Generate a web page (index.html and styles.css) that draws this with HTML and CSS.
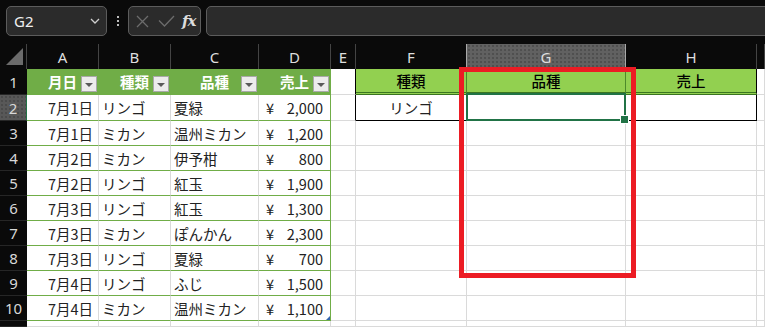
FILE: index.html
```html
<!DOCTYPE html>
<html lang="ja">
<head>
    <meta charset="UTF-8">
    <title>Sheet</title>
    <link rel="stylesheet" href="styles.css">
</head>
<body>
    <div class="toolbar">
        <div class="namebox">
            <span>G2</span>
            <svg width="10" height="6" viewBox="0 0 10 6"><polyline points="1,1 5,5 9,1" fill="none" stroke="#cfcfcf" stroke-width="1.3"/></svg>
        </div>
        <div class="grip"><i></i><i></i><i></i></div>
        <div class="fxbox">
            <svg width="13" height="13" viewBox="0 0 13 13"><path d="M1 1 L12 12 M12 1 L1 12" stroke="#6c6c6c" stroke-width="1.3"/></svg>
            <svg width="17" height="12" viewBox="0 0 17 12"><polyline points="1,5.5 6.5,11 16,1" fill="none" stroke="#6c6c6c" stroke-width="1.3"/></svg>
            <span class="fx">fx</span>
        </div>
        <div class="formula"></div>
    </div>

    <div class="sheet">
        <div class="row cols">
            <div class="corner"><span class="tri"></span></div>
            <div class="colhead c-a">A</div>
            <div class="colhead c-b">B</div>
            <div class="colhead c-c">C</div>
            <div class="colhead c-d">D</div>
            <div class="colhead c-e">E</div>
            <div class="colhead c-f">F</div>
            <div class="colhead c-g active">G</div>
            <div class="colhead c-h">H</div>
            <div class="colhead c-i"></div>
        </div>

        <div class="row tall">
            <div class="rowhead">1</div>
            <div class="cell c-a thead">月日<span class="filter"></span></div>
            <div class="cell c-b thead">種類<span class="filter"></span></div>
            <div class="cell c-c thead">品種<span class="filter"></span></div>
            <div class="cell c-d thead">売上<span class="filter"></span></div>
            <div class="cell c-e edge"></div>
            <div class="cell c-f fhead">種類</div>
            <div class="cell c-g fhead">品種</div>
            <div class="cell c-h fhead last">売上</div>
            <div class="cell c-i"></div>
        </div>

        <div class="row tall">
            <div class="rowhead active">2</div>
            <div class="cell c-a tbl right">7月1日</div>
            <div class="cell c-b tbl">リンゴ</div>
            <div class="cell c-c tbl">夏緑</div>
            <div class="cell c-d tbl money"><span>¥</span><span>2,000</span></div>
            <div class="cell c-e edge"></div>
            <div class="cell c-f fcell center">リンゴ</div>
            <div class="cell c-g fcell selected"></div>
            <div class="cell c-h fcell last"></div>
            <div class="cell c-i"></div>
        </div>

        <div class="row">
            <div class="rowhead">3</div>
            <div class="cell c-a tbl right">7月1日</div>
            <div class="cell c-b tbl">ミカン</div>
            <div class="cell c-c tbl">温州ミカン</div>
            <div class="cell c-d tbl money"><span>¥</span><span>1,200</span></div>
            <div class="cell c-e"></div>
            <div class="cell c-f"></div>
            <div class="cell c-g"></div>
            <div class="cell c-h"></div>
            <div class="cell c-i"></div>
        </div>

        <div class="row">
            <div class="rowhead">4</div>
            <div class="cell c-a tbl right">7月2日</div>
            <div class="cell c-b tbl">ミカン</div>
            <div class="cell c-c tbl">伊予柑</div>
            <div class="cell c-d tbl money"><span>¥</span><span>800</span></div>
            <div class="cell c-e"></div>
            <div class="cell c-f"></div>
            <div class="cell c-g"></div>
            <div class="cell c-h"></div>
            <div class="cell c-i"></div>
        </div>

        <div class="row">
            <div class="rowhead">5</div>
            <div class="cell c-a tbl right">7月2日</div>
            <div class="cell c-b tbl">リンゴ</div>
            <div class="cell c-c tbl">紅玉</div>
            <div class="cell c-d tbl money"><span>¥</span><span>1,900</span></div>
            <div class="cell c-e"></div>
            <div class="cell c-f"></div>
            <div class="cell c-g"></div>
            <div class="cell c-h"></div>
            <div class="cell c-i"></div>
        </div>

        <div class="row">
            <div class="rowhead">6</div>
            <div class="cell c-a tbl right">7月3日</div>
            <div class="cell c-b tbl">リンゴ</div>
            <div class="cell c-c tbl">紅玉</div>
            <div class="cell c-d tbl money"><span>¥</span><span>1,300</span></div>
            <div class="cell c-e"></div>
            <div class="cell c-f"></div>
            <div class="cell c-g"></div>
            <div class="cell c-h"></div>
            <div class="cell c-i"></div>
        </div>

        <div class="row">
            <div class="rowhead">7</div>
            <div class="cell c-a tbl right">7月3日</div>
            <div class="cell c-b tbl">ミカン</div>
            <div class="cell c-c tbl">ぽんかん</div>
            <div class="cell c-d tbl money"><span>¥</span><span>2,300</span></div>
            <div class="cell c-e"></div>
            <div class="cell c-f"></div>
            <div class="cell c-g"></div>
            <div class="cell c-h"></div>
            <div class="cell c-i"></div>
        </div>

        <div class="row">
            <div class="rowhead">8</div>
            <div class="cell c-a tbl right">7月3日</div>
            <div class="cell c-b tbl">リンゴ</div>
            <div class="cell c-c tbl">夏緑</div>
            <div class="cell c-d tbl money"><span>¥</span><span>700</span></div>
            <div class="cell c-e"></div>
            <div class="cell c-f"></div>
            <div class="cell c-g"></div>
            <div class="cell c-h"></div>
            <div class="cell c-i"></div>
        </div>

        <div class="row">
            <div class="rowhead">9</div>
            <div class="cell c-a tbl right">7月4日</div>
            <div class="cell c-b tbl">リンゴ</div>
            <div class="cell c-c tbl">ふじ</div>
            <div class="cell c-d tbl money"><span>¥</span><span>1,500</span></div>
            <div class="cell c-e"></div>
            <div class="cell c-f"></div>
            <div class="cell c-g"></div>
            <div class="cell c-h"></div>
            <div class="cell c-i"></div>
        </div>

        <div class="row">
            <div class="rowhead">10</div>
            <div class="cell c-a tbl right">7月4日</div>
            <div class="cell c-b tbl">ミカン</div>
            <div class="cell c-c tbl">温州ミカン</div>
            <div class="cell c-d tbl money table-end"><span>¥</span><span>1,100</span></div>
            <div class="cell c-e"></div>
            <div class="cell c-f"></div>
            <div class="cell c-g"></div>
            <div class="cell c-h"></div>
            <div class="cell c-i"></div>
        </div>

        <div class="row partial">
            <div class="rowhead"></div>
            <div class="cell c-a"></div>
            <div class="cell c-b"></div>
            <div class="cell c-c"></div>
            <div class="cell c-d"></div>
            <div class="cell c-e"></div>
            <div class="cell c-f"></div>
            <div class="cell c-g"></div>
            <div class="cell c-h"></div>
            <div class="cell c-i"></div>
        </div>
    </div>

    <div class="highlight"></div>
</body>
</html>
```

FILE: styles.css
```css
* {
    margin: 0;
    padding: 0;
    box-sizing: border-box;
}
body {
    width: 765px;
    height: 327px;
    overflow: hidden;
    position: relative;
    background: #0a0a0a;
    font-family: "Noto Sans CJK JP", sans-serif;
}
.toolbar {
    height: 44px;
    display: flex;
    align-items: flex-start;
    padding: 6px 0 0 6px;
}
.namebox, .fxbox, .formula {
    height: 30px;
    background: #2b2b2b;
    border: 1px solid #5c5c5c;
    border-radius: 5px;
}
.namebox {
    width: 101px;
    display: flex;
    align-items: center;
    justify-content: space-between;
    padding: 0 6px 0 7px;
    color: #f0f0f0;
    font-family: "Noto Sans", sans-serif;
    font-size: 15px;
}
.grip {
    width: 21px;
    height: 30px;
    display: flex;
    flex-direction: column;
    align-items: center;
    justify-content: center;
    gap: 2px;
}
.grip i {
    width: 2px;
    height: 2px;
    background: #bdbdbd;
}
.fxbox {
    width: 73px;
    display: flex;
    align-items: center;
    padding: 0 0 0 7px;
    gap: 9px;
}
.fx {
    font-family: "DejaVu Serif", serif;
    font-style: italic;
    font-weight: 700;
    font-size: 15px;
    color: #dcdcdc;
    margin-left: -2px;
    letter-spacing: -1px;
}
.formula {
    flex: 1;
    margin-left: 5px;
    margin-right: -6px;
}
.sheet {
    display: flex;
    flex-direction: column;
}
.row {
    display: flex;
    height: 25px;
    flex: none;
}
.row.tall {
    height: 26px;
}
.row.partial {
    height: 6px;
}
.corner {
    width: 27px;
    border-right: 1px solid #444;
    position: relative;
}
.tri {
    position: absolute;
    right: 3px;
    bottom: 4px;
    width: 17px;
    height: 17px;
    background: #6b6b6b;
    clip-path: polygon(100% 0, 100% 100%, 0 100%);
}
.colhead {
    flex: none;
    display: flex;
    align-items: center;
    justify-content: center;
    border-right: 1px solid #444;
    color: #dedede;
    font-family: "Noto Sans", sans-serif;
    font-size: 15px;
}
.colhead.active {
    background-color: #616161;
    background-image: radial-gradient(circle, #4f4f4f 0.7px, transparent 0.9px);
    background-size: 4px 4px;
    border-left: 1px solid #a8a8a8;
    border-right: 1px solid #a8a8a8;
    margin-left: -1px;
    width: 160px;
}
.rowhead {
    width: 27px;
    flex: none;
    display: flex;
    align-items: center;
    justify-content: center;
    color: #d8d8d8;
    font-family: "Noto Sans", sans-serif;
    font-size: 15px;
    border-bottom: 1px solid #262626;
}
.rowhead.active {
    background-color: #585858;
    background-image: radial-gradient(circle, #4a4a4a 0.7px, transparent 0.9px);
    background-size: 4px 4px;
    border-right: 1px solid #217346;
}
.cell {
    flex: none;
    display: flex;
    align-items: center;
    padding: 0 3px;
    background: #fff;
    border-right: 1px solid #dadada;
    border-bottom: 1px solid #dadada;
    color: #222;
    font-size: 14.5px;
    white-space: nowrap;
}
.c-a { width: 72px; }
.c-b { width: 72px; }
.c-c { width: 88px; }
.c-d { width: 72px; }
.c-e { width: 25px; }
.c-f { width: 111px; }
.c-g { width: 159px; }
.c-h { width: 131px; }
.c-i { flex: 1; }
.right {
    justify-content: flex-end;
    padding-right: 5px;
}
.center {
    justify-content: center;
}
.money {
    justify-content: space-between;
    padding: 0 7px;
}
.tbl {
    border-bottom-color: #70ad47;
}
.tbl.c-d, .thead.c-d {
    border-right-color: #70ad47;
}
.thead {
    position: relative;
    justify-content: center;
    background: #70ad47;
    border-color: #70ad47;
    color: #fff;
    font-weight: 700;
}
.filter {
    position: absolute;
    right: 1px;
    bottom: 2px;
    width: 16px;
    height: 16px;
    display: flex;
    align-items: center;
    justify-content: center;
    background: #ececec;
    border: 1px solid #a9a9a9;
}
.filter::after {
    content: "";
    border-left: 4px solid transparent;
    border-right: 4px solid transparent;
    border-top: 4px solid #5a5a5a;
    margin-top: 1px;
}
.table-end {
    position: relative;
}
.table-end::after {
    content: "";
    position: absolute;
    right: 0;
    bottom: 0;
    width: 4px;
    height: 4px;
    background: #3565b0;
    clip-path: polygon(100% 0, 100% 100%, 0 100%);
}
.edge {
    border-right-color: #000;
}
.fhead {
    justify-content: center;
    background: #92d050;
    border-right-color: #4d8a2a;
    border-bottom: 3px double #3a7520;
    color: #000;
    font-weight: 500;
}
.fcell {
    border-bottom-color: #000;
}
.last {
    border-right-color: #000;
}
.selected {
    position: relative;
    z-index: 2;
}
.selected::after {
    content: "";
    position: absolute;
    top: -2px;
    left: -1px;
    right: -1px;
    bottom: -1px;
    border: 2px solid #217346;
}
.selected::before {
    content: "";
    position: absolute;
    right: -4px;
    bottom: -4px;
    width: 7px;
    height: 7px;
    background: #217346;
    border: 1px solid #fff;
    z-index: 1;
}
.highlight {
    position: absolute;
    left: 459px;
    top: 67px;
    width: 177px;
    height: 211px;
    border: 5px solid #ec1c24;
    z-index: 5;
}
```
